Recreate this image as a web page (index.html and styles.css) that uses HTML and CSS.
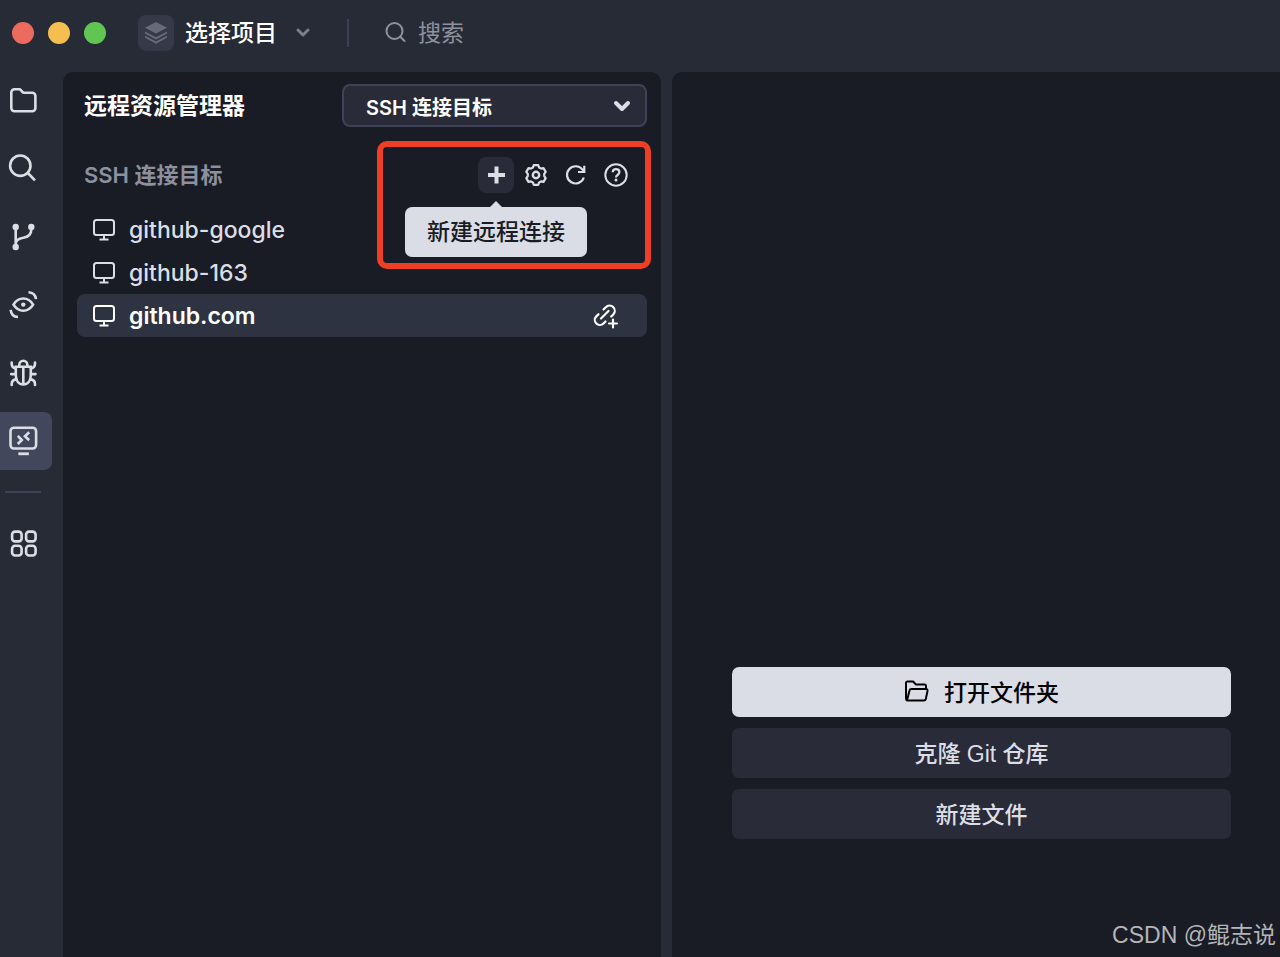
FILE: index.html
```html
<!DOCTYPE html>
<html lang="zh-CN">
<head>
<meta charset="utf-8">
<meta name="viewport" content="width=device-width, initial-scale=1">
<title>远程资源管理器</title>
<link rel="stylesheet" href="styles.css">
</head>
<body>
<div class="app">
  <header class="titlebar">
    <div class="lights">
      <span class="light light-red"></span>
      <span class="light light-yellow"></span>
      <span class="light light-green"></span>
    </div>
    <button class="project" type="button">
      <span class="project-icon">
        <svg width="24" height="24" viewBox="0 0 24 24" fill="#666b7a"><path d="M12 1 23 6.800 12 12.600 1 6.800z"/><path d="M1 10.400 12 16.200 23 10.400v2L12 18.400 1 12.400z"/><path d="M1 14.800 12 20.600 23 14.800v2L12 22.800 1 16.800z"/></svg>
      </span>
      <span>选择项目</span>
      <svg class="project-chevron" width="16" height="16" viewBox="0 0 16 16" fill="none" stroke="#7b7f8a" stroke-width="3" stroke-linecap="round" stroke-linejoin="round"><path d="M3 5 8 10 13 5"/></svg>
    </button>
    <span class="separator"></span>
    <label class="search">
      <svg width="22" height="22" viewBox="0 0 22 22" fill="none" stroke="#8f929d" stroke-width="2" stroke-linecap="round"><circle cx="9.500" cy="9" r="8"/><path d="M15.300 14.800 19.500 19"/></svg>
      <input type="text" placeholder="搜索" aria-label="搜索">
    </label>
  </header>

  <div class="workspace">
    <nav class="rail" aria-label="活动栏">
      <button class="rail-item" type="button" aria-label="文件">
        <svg class="rail-icon" viewBox="0 0 32 32"><path d="M4.300 7.500a3.200 3.200 0 0 1 3.200-3.200h4.600q1.200 0 1.900.9l1.300 1.700q.7.900 1.900.9h8a3.200 3.200 0 0 1 3.200 3.200v12a3.200 3.200 0 0 1-3.200 3.200H7.500a3.200 3.200 0 0 1-3.200-3.200z"/></svg>
      </button>
      <button class="rail-item" type="button" aria-label="搜索文件">
        <svg class="rail-icon" viewBox="0 0 32 32"><circle cx="13.300" cy="12.700" r="10.200"/><path d="M20.800 20 28 27.300"/></svg>
      </button>
      <button class="rail-item" type="button" aria-label="源代码管理">
        <svg class="rail-icon" viewBox="0 0 32 32"><path d="M8.700 6v20M24.300 6v2.500c0 5-3 7.500-8 8.200-4.600.6-7.600 2.300-7.600 6.300"/><g fill="currentColor" stroke="none"><circle cx="8.700" cy="6" r="3.200"/><circle cx="24.300" cy="6" r="3.200"/><circle cx="8.700" cy="26" r="3.200"/></g></svg>
      </button>
      <button class="rail-item" type="button" aria-label="预览">
        <svg class="rail-icon" viewBox="0 0 32 32"><path stroke-linecap="round" d="M6.500 15.600C9 11.500 12.300 9.500 16.300 9.500s7.300 2 9.800 6.100c-2.500 4.100-5.800 6.100-9.800 6.100s-7.300-2-9.800-6.100z"/><circle cx="16.300" cy="15.600" r="2.200" fill="currentColor" stroke="none"/><path d="M21.500 3.200c4.300.2 7 2.900 7.500 7M3.700 20.800c.3 4.300 3 6.900 7.300 7.200"/></svg>
      </button>
      <button class="rail-item" type="button" aria-label="调试">
        <svg class="rail-icon" viewBox="0 0 32 32" stroke-linecap="round"><path d="M12.300 9.500V7.800a4 4 0 0 1 8 0v1.700M8.800 9.700h15v8.500c0 5.500-3 9.200-7.500 9.200s-7.500-3.700-7.500-9.200zM16.300 10v17"/><path d="M4.700 5.500v1.200c0 2.800 1.300 4.300 4 4.800M28 5.500v1.200c0 2.800-1.400 4.300-4.100 4.800M4.200 17.100h4.500M24 17.100h4.500M4.700 28v-1c0-2.600 1.800-4.300 4.800-4.600M28 28v-1c0-2.600-1.900-4.300-4.900-4.600"/></svg>
      </button>
      <button class="rail-item rail-active" type="button" aria-label="远程资源管理器">
        <svg class="rail-icon" viewBox="0 0 32 32"><rect x="3.500" y="2.700" width="25.600" height="20.800" rx="3.500"/><path stroke-width="2.800" d="M11.300 28.800h10.600"/><path d="M10.800 10.900 14.800 15 10.800 19M22.200 7.300 18 11.200 22.200 15.200"/></svg>
      </button>
      <span class="rail-divider"></span>
      <button class="rail-item" type="button" aria-label="扩展">
        <svg class="rail-icon" viewBox="0 0 32 32"><rect x="5.100" y="4.600" width="9.500" height="9.800" rx="3"/><rect x="19.100" y="4.600" width="9.500" height="9.800" rx="3"/><rect x="5.100" y="18.700" width="9.500" height="9.800" rx="3"/><rect x="19.100" y="18.700" width="9.500" height="9.800" rx="3"/></svg>
      </button>
    </nav>

    <aside class="panel">
      <div class="panel-head">
        <h1 class="panel-title">远程资源管理器</h1>
        <div class="select-box">
          <select aria-label="连接类型"><option>SSH 连接目标</option></select>
          <svg width="18" height="12" viewBox="0 0 18 12" fill="none" stroke="#dcdee6" stroke-width="4" stroke-linecap="round" stroke-linejoin="round"><path d="M3 3 9 9 15 3"/></svg>
        </div>
      </div>

      <div class="group-head">
        <h2 class="group-title">SSH 连接目标</h2>
        <div class="actions">
          <span class="highlight"></span>
          <button class="action action-hover" type="button" aria-describedby="tip">
            <svg width="24" height="24" viewBox="0 0 24 24" fill="none" stroke="currentColor" stroke-width="4"><path d="M12.500 3.500v17M4 12h17"/></svg>
            <span class="tooltip" id="tip" role="tooltip">新建远程连接</span>
          </button>
          <button class="action" type="button" aria-label="设置">
            <svg width="24" height="24" viewBox="0 0 24 24" fill="none" stroke="currentColor" stroke-width="2.200" stroke-linejoin="round"><path d="M9.800 2.200h4.400l.9 2.300 2 1.100 2.400-.5 2.200 3.800L20.200 10.900v2.200l1.500 2-2.200 3.800-2.400-.5-2 1.100-.9 2.300H9.800l-.9-2.300-2-1.100-2.400.5-2.200-3.800 1.500-2v-2.200L2.300 8.900l2.200-3.800 2.400.5 2-1.100z"/><circle cx="12" cy="12" r="3.200" stroke-width="2.400"/></svg>
          </button>
          <button class="action" type="button" aria-label="刷新">
            <svg width="24" height="24" viewBox="0 0 24 24" fill="none" stroke="currentColor" stroke-width="2.200"><path d="M19.800 14.500A8.600 8.600 0 1 1 18.500 6.700l1.500 2M20.300 2.800V9h-6.300"/></svg>
          </button>
          <button class="action" type="button" aria-label="帮助">
            <svg width="24" height="24" viewBox="0 0 24 24" fill="none" stroke="currentColor" stroke-width="2"><circle cx="12" cy="12" r="10.700"/><path stroke-width="2.200" d="M8.700 9.300c.1-2 1.400-3.100 3.300-3.100s3.400 1.200 3.400 2.900c0 1.300-.7 2.100-1.800 2.900-1.100.7-1.600 1.200-1.600 2.400"/><circle cx="12" cy="17" r="1.500" fill="currentColor" stroke="none"/></svg>
          </button>
        </div>
      </div>

      <ul class="hosts">
        <li class="host">
          <svg width="24" height="24" viewBox="0 0 24 24" fill="none" stroke="currentColor" stroke-width="2"><rect x="2" y="2" width="20" height="15" rx="2.500"/><path d="M12 17v4.500M7.500 21.500h9"/></svg>
          <span>github-google</span>
        </li>
        <li class="host">
          <svg width="24" height="24" viewBox="0 0 24 24" fill="none" stroke="currentColor" stroke-width="2"><rect x="2" y="2" width="20" height="15" rx="2.500"/><path d="M12 17v4.500M7.500 21.500h9"/></svg>
          <span>github-163</span>
        </li>
        <li class="host host-selected">
          <svg width="24" height="24" viewBox="0 0 24 24" fill="none" stroke="currentColor" stroke-width="2"><rect x="2" y="2" width="20" height="15" rx="2.500"/><path d="M12 17v4.500M7.500 21.500h9"/></svg>
          <span>github.com</span>
          <button class="connect" type="button" aria-label="连接">
            <svg width="26" height="26" viewBox="0 0 26 26" fill="none" stroke="currentColor" stroke-width="2.200" stroke-linecap="round"><path d="M8 15.500 15.500 8M10.500 6.500l2.300-2.300a5 5 0 0 1 7.500 7.200l-2.100 2.100M5.500 11.200l-2.200 2.200a5 5 0 0 0 7.200 7.100l2-2M20 16.500v8M16 20.500h8"/></svg>
          </button>
        </li>
      </ul>
    </aside>

    <main class="editor">
      <div class="start">
        <button class="start-button start-primary" type="button">
          <svg width="26" height="24" viewBox="0 0 26 24" fill="none" stroke="currentColor" stroke-width="2" stroke-linejoin="round"><path d="M3 21.500Q2 21 2 19.500V4a1.500 1.500 0 0 1 1.500-1.500h5.500l3 3H20.500a1.500 1.500 0 0 1 1.500 1.500V10M3 21.500 5.500 11.500Q5.800 10 7.500 10h14.500q1.800 0 1.500 2l-1.700 8q-.4 1.500-2 1.500z"/></svg>
          <span>打开文件夹</span>
        </button>
        <button class="start-button" type="button">克隆 Git 仓库</button>
        <button class="start-button" type="button">新建文件</button>
      </div>
      <span class="watermark">CSDN @鲲志说</span>
    </main>
  </div>
</div>
</body>
</html>
```
FILE: styles.css
```css
* {
  box-sizing: border-box;
}

body {
  margin: 0;
  background: #272b36;
  color: #dcdee6;
  font-family: Inter, "Noto Sans CJK SC", sans-serif;
}

button,
input,
select {
  margin: 0;
  padding: 0;
  border: 0;
  background: none;
  color: inherit;
  font: inherit;
}

svg {
  display: block;
  flex: none;
}

.app {
  display: flex;
  flex-direction: column;
  min-height: 100vh;
}

/* Title bar */
.titlebar {
  display: flex;
  align-items: center;
  height: 72px;
  padding: 0 12px 6px;
}

.lights {
  display: flex;
  gap: 14px;
}

.light {
  width: 22px;
  height: 22px;
  border-radius: 50%;
}

.light-red { background: #ed6a5e; }
.light-yellow { background: #f5bf4f; }
.light-green { background: #61c554; }

.project {
  display: flex;
  align-items: center;
  gap: 11px;
  margin-left: 32px;
  color: #fff;
  font-size: 23px;
  font-weight: 500;
  line-height: 36px;
}

.project-icon {
  display: grid;
  place-items: center;
  width: 36px;
  height: 36px;
  border-radius: 8px;
  background: #363a48;
}

.project-chevron {
  margin-left: 7px;
}

.separator {
  width: 2px;
  height: 28px;
  margin: 0 36px;
  background: #3d4154;
}

.search {
  display: flex;
  flex: 1;
  align-items: center;
  gap: 11px;
}

.search input {
  flex: 1;
  min-width: 0;
  outline: 0;
  font-size: 23px;
  line-height: 36px;
}

.search input::placeholder {
  color: #8f929d;
  opacity: 1;
}

.workspace {
  display: flex;
  flex: 1;
}

/* Activity rail */
.rail {
  display: flex;
  flex: none;
  flex-direction: column;
  gap: 10px;
  width: 63px;
}

.rail-item {
  display: grid;
  place-items: center;
  width: 52px;
  height: 58px;
  padding-right: 6px;
  color: #dcdee6;
}

.rail-icon {
  width: 32px;
  height: 32px;
  fill: none;
  stroke: currentColor;
  stroke-width: 2.6;
}

.rail-active {
  border-radius: 0 8px 8px 0;
  background: #43475c;
}

.rail-divider {
  width: 36px;
  height: 2px;
  margin: 11px 0 11px 5px;
  background: #3d4154;
}

/* Remote explorer */
.panel {
  flex: 0 1 598px;
  padding: 12px 14px;
  border-radius: 10px 10px 0 0;
  background: #191b25;
}

.panel-head {
  display: flex;
  align-items: center;
  justify-content: space-between;
  padding-left: 7px;
}

.panel-title {
  margin: 0;
  color: #fff;
  font-size: 23px;
  font-weight: 700;
  line-height: 36px;
}

.select-box {
  display: grid;
  flex: 0 1 305px;
  align-items: center;
}

.select-box select,
.select-box svg {
  grid-area: 1 / 1;
}

.select-box select {
  width: 100%;
  height: 43px;
  padding: 4px 40px 0 22px;
  border: 2px solid #3f4358;
  border-radius: 8px;
  background: #292b39;
  appearance: none;
  color: #fff;
  font-size: 20px;
  font-weight: 600;
}

.select-box svg {
  justify-self: end;
  margin-right: 16px;
  pointer-events: none;
}

.group-head {
  display: flex;
  align-items: center;
  justify-content: space-between;
  margin: 30px 13px 15px 7px;
}

.group-title {
  margin: 0;
  color: #8d909d;
  font-size: 22px;
  font-weight: 600;
  line-height: 36px;
}

.actions {
  position: relative;
  display: flex;
  gap: 4px;
}

.action {
  position: relative;
  display: grid;
  place-items: center;
  width: 36px;
  height: 36px;
  border-radius: 8px;
}

.action-hover {
  background: #292b39;
}

.tooltip {
  position: absolute;
  top: 50px;
  left: 50%;
  z-index: 1;
  padding: 7px 22px;
  border-radius: 7px;
  background: #dadde5;
  color: #191b25;
  font-size: 23px;
  font-weight: 500;
  line-height: 36px;
  white-space: nowrap;
  transform: translateX(-50%);
}

.tooltip::before {
  content: "";
  position: absolute;
  bottom: 100%;
  left: 50%;
  border: 6px solid transparent;
  border-top-width: 0;
  border-bottom-color: #dadde5;
  transform: translateX(-50%);
}

.highlight {
  position: absolute;
  top: -16px;
  right: -17px;
  width: 274px;
  height: 128px;
  border: 6px solid #ee3f24;
  border-radius: 10px;
  pointer-events: none;
}

.hosts {
  margin: 0;
  padding: 0;
  list-style: none;
}

.host {
  display: flex;
  align-items: center;
  gap: 13px;
  height: 43px;
  padding: 0 28px 0 15px;
  border-radius: 8px;
  font-size: 23px;
  font-weight: 500;
  line-height: 36px;
}

.host-selected {
  background: #2e3341;
  color: #fff;
  font-weight: 600;
}

.connect {
  margin-left: auto;
}

/* Editor area */
.editor {
  position: relative;
  display: flex;
  flex: 1;
  flex-direction: column;
  justify-content: flex-end;
  margin-left: 11px;
  padding: 0 49px 118px 60px;
  border-radius: 10px 0 0 0;
  background: #191b25;
}

.start {
  display: flex;
  flex-direction: column;
  gap: 11px;
}

.start-button {
  display: flex;
  align-items: center;
  justify-content: center;
  gap: 14px;
  height: 50px;
  padding-bottom: 3px;
  border-radius: 7px;
  background: #292b39;
  font-family: "Liberation Sans", "Noto Sans CJK SC", sans-serif;
  font-size: 23px;
  font-weight: 500;
}

.start-primary {
  background: #dadde5;
  color: #000;
}

.watermark {
  position: absolute;
  right: 4px;
  bottom: 4px;
  color: #b4b5b8;
  font-family: "Liberation Sans", "Noto Sans CJK SC", sans-serif;
  font-size: 23px;
  line-height: 36px;
}
```
